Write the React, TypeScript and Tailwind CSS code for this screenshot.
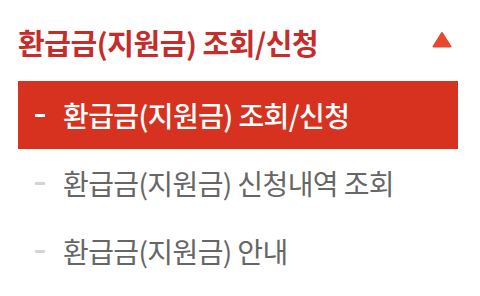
const items = [
  { label: '환급금(지원금) 조회/신청', active: true },
  { label: '환급금(지원금) 신청내역 조회', active: false },
  { label: '환급금(지원금) 안내', active: false },
];

export default function App() {
  return (
    <div
      className="w-[480px] h-[296px] bg-white pl-[18px] pr-[22px] pt-[22px]"
      style={{ fontFamily: '"Noto Sans CJK KR", "Noto Sans", sans-serif' }}
    >
      <div className="flex items-center justify-between h-[40px]">
        <h2 className="text-[29px] font-bold tracking-[-0.45px] text-[#c62c2a] leading-none">
          환급금(지원금) 조회/신청
        </h2>
        <svg width="20" height="17" viewBox="0 0 20 17" className="mr-[6px] -mt-[6px]">
          <polygon points="10,2 18.5,15.5 1.5,15.5" fill="#e64a2e" stroke="#e64a2e" strokeWidth="2" strokeLinejoin="round" />
        </svg>
      </div>
      <ul className="mt-[19px]">
        {items.map((it) => (
          <li
            key={it.label}
            className={`flex items-center h-[68px] pl-[17px] text-[28px] tracking-[-0.6px] leading-none ${
              it.active ? 'bg-[#d6321f] text-white font-medium' : 'text-[#666]'
            }`}
          >
            <span
              className={`w-[10px] h-[3px] mr-[18px] mt-[1px] ${it.active ? 'bg-white' : 'bg-[#d4d4d4]'}`}
            />
            {it.label}
          </li>
        ))}
      </ul>
    </div>
  );
}
